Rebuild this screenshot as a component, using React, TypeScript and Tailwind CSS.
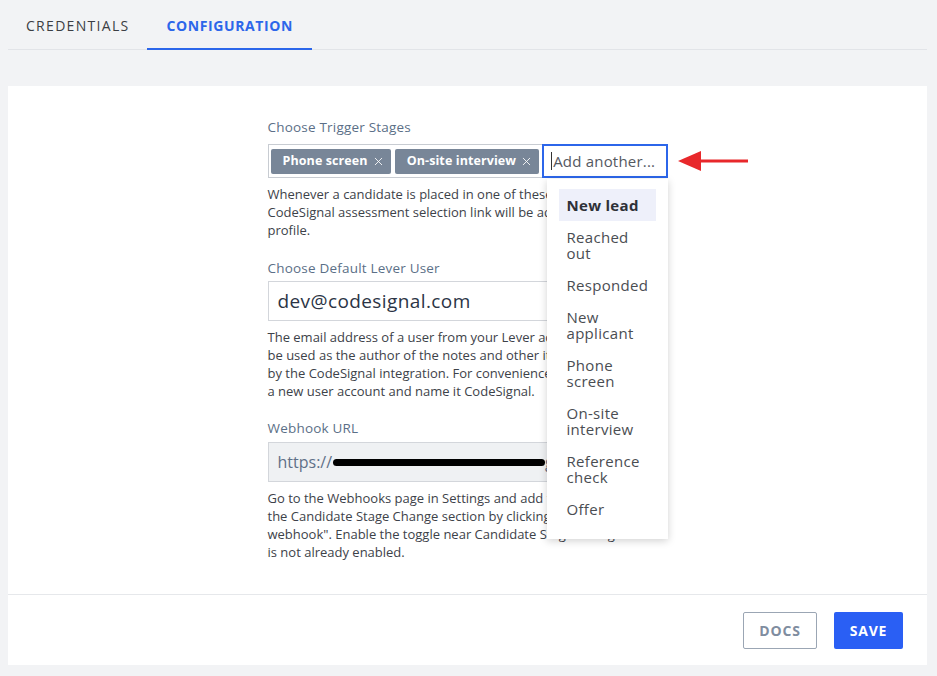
import { X } from "lucide-react";

const font = { fontFamily: '"Open Sans", "Liberation Sans", sans-serif' };

const stages = [
  { label: ["New lead"], active: true },
  { label: ["Reached", "out"] },
  { label: ["Responded"] },
  { label: ["New", "applicant"] },
  { label: ["Phone", "screen"] },
  { label: ["On-site", "interview"] },
  { label: ["Reference", "check"] },
  { label: ["Offer"] },
];

function Tag({ text }: { text: string }) {
  return (
    <span className="flex h-[25px] items-center gap-1 whitespace-nowrap rounded-[2px] bg-[#788698] pl-3 pr-[6px] text-[12.5px] font-bold tracking-[0.1px] text-white">
      {text}
      <X className="h-[13px] w-[13px]" strokeWidth={1.6} />
    </span>
  );
}

function StageMenu() {
  return (
    <div className="absolute left-[279px] top-[61px] z-10 w-[121px] bg-white pb-[14px] pl-3 pr-3 pt-[10px] shadow-[0_2px_8px_rgba(0,0,0,0.18)]">
      {stages.map((s) => (
        <div
          key={s.label.join(" ")}
          className={
            "whitespace-nowrap px-2 py-2 text-[15px] leading-4 tracking-[0.3px] " +
            (s.active ? "bg-[#eef0fa] font-bold text-[#2e3138]" : "text-[#4a4d52]")
          }
        >
          {s.label.map((l, i) => (
            <div key={i}>{l}</div>
          ))}
        </div>
      ))}
    </div>
  );
}

export default function App() {
  return (
    <div className="h-[676px] w-full bg-[#f2f3f5] pl-2 pr-[10px]" style={font}>
      <div className="flex h-[50px] border-b border-[#e2e4e8]">
        <div className="flex items-center px-[18px] pt-px text-[14px] tracking-[1.3px] text-[#3b3e44]">
          CREDENTIALS
        </div>
        <div className="-mb-px flex items-center border-b-2 border-[#2c66ea] px-[19px] pt-[3px] text-[14px] font-bold tracking-[0.6px] text-[#2c66ea]">
          CONFIGURATION
        </div>
      </div>

      <div className="mt-9 flex h-[579px] flex-col bg-white">
        <div className="flex h-[508px] justify-center pt-8">
          <div className="relative w-[400px] text-[13px] leading-[18px] text-[#3d4249]">
            <div className="text-[13.5px] tracking-[0.2px] text-[#5b6f87]">Choose Trigger Stages</div>
            <div className="relative mt-2 flex h-[34px] items-center gap-1 border border-[#c8ccd2] pl-[2px]">
              <Tag text="Phone screen" />
              <Tag text="On-site interview" />
              <div className="-my-px -mr-px -ml-px flex h-[34px] flex-1 items-center whitespace-nowrap border-2 border-[#2c66ea] pl-[7px] text-[15px] tracking-[0.2px] text-[#55595f]">
                <span className="mr-px h-[18px] w-px bg-[#333]" />
                Add another...
              </div>
              <svg
                className="absolute left-[408px] top-[4px]"
                width="72"
                height="24"
                viewBox="0 0 72 24"
              >
                <line x1="20" y1="12" x2="71" y2="12" stroke="#e8282b" strokeWidth="3" />
                <polygon points="1,12 24,2 24,22" fill="#e8282b" />
              </svg>
            </div>
            <StageMenu />
            <p className="mt-[7px]">
              Whenever a candidate is placed in one of these stages, a
              <br />
              CodeSignal assessment selection link will be added to
              <br />
              profile.
            </p>

            <div className="mt-[20px] text-[13.5px] tracking-[0.2px] text-[#5b6f87]">Choose Default Lever User</div>
            <div className="mt-1 flex h-[40px] items-center border border-[#d3d6db] px-[9px] text-[19px] tracking-[0.4px] text-[#2b3445]">
              dev@codesignal.com
            </div>
            <p className="mt-[7px]">
              The email address of a user from your Lever account will
              <br />
              be used as the author of the notes and other items
              <br />
              by the CodeSignal integration. For convenience, create
              <br />
              a new user account and name it CodeSignal.
            </p>

            <div className="mt-[19px] text-[13.5px] tracking-[0.2px] text-[#5b6f87]">Webhook URL</div>
            <div className="mt-[5px] flex h-[40px] items-center overflow-hidden whitespace-nowrap border border-[#d3d6db] bg-[#eff1f3] px-[9px] text-[16px] text-[#5f7088]">
              https://
              <span className="ml-[1px] inline-block h-[7px] w-[212px] rounded-full bg-black" />
              <span>gnal.lever.co</span>
            </div>
            <p className="mt-[7px]">
              Go to the Webhooks page in Settings and add this URL to
              <br />
              the Candidate Stage Change section by clicking "Add
              <br />
              webhook". Enable the toggle near Candidate Stage Change
              <br />
              is not already enabled.
            </p>
          </div>
        </div>

        <div className="flex justify-end gap-[17px] border-t border-[#e6e8eb] pr-6 pt-[17px]">
          <button className="h-[37px] w-[74px] rounded-[2px] border border-[#9ba6b4] text-[14px] font-bold tracking-[0.8px] text-[#7f8da0]">
            DOCS
          </button>
          <button className="h-[37px] w-[69px] rounded-[2px] bg-[#2a5ff4] text-[14px] font-bold tracking-[0.8px] text-white">
            SAVE
          </button>
        </div>
      </div>
    </div>
  );
}
